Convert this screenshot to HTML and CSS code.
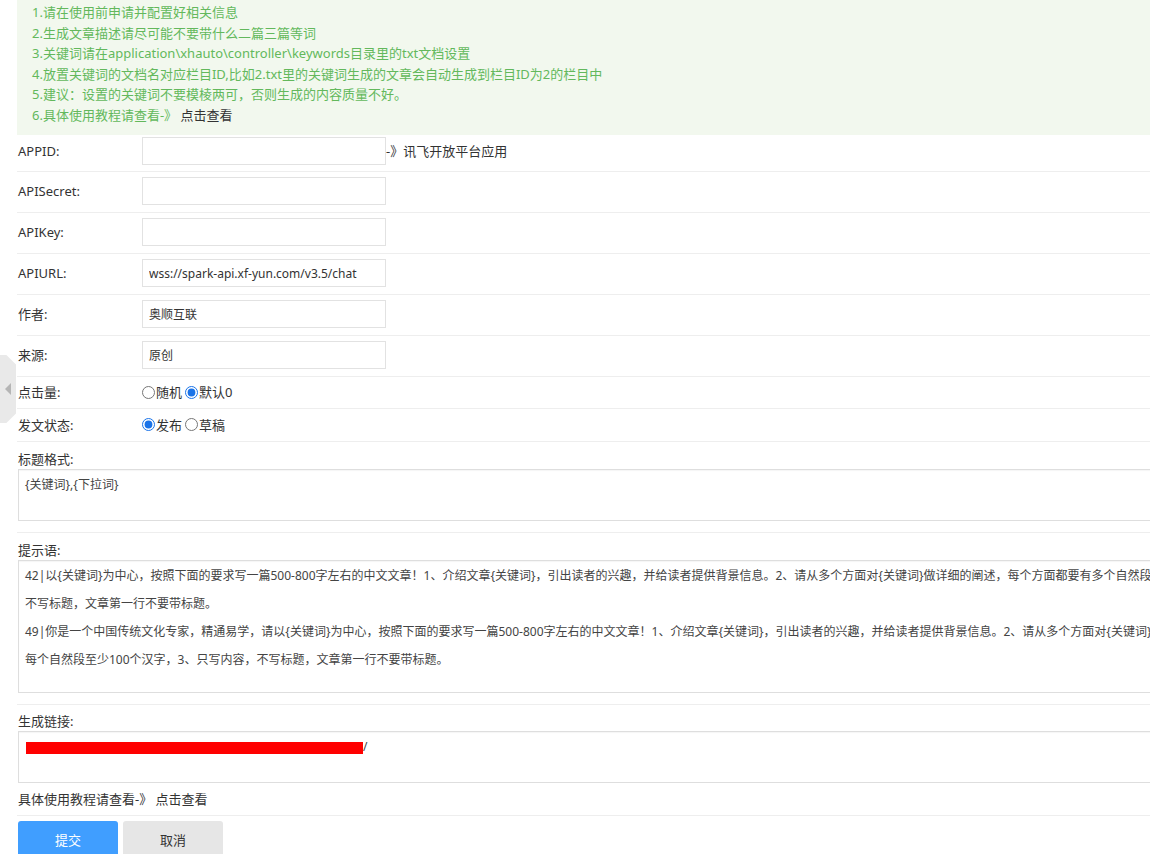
FILE: index.html
```html
<!DOCTYPE html>
<html lang="zh-CN">
<head>
<meta charset="utf-8">
<title>讯飞星火自动生成文章设置</title>
<link rel="stylesheet" href="styles.css">
</head>
<body>
<div class="page">
  <div class="tips">
    <div>1.请在使用前申请并配置好相关信息</div>
    <div>2.生成文章描述请尽可能不要带什么二篇三篇等词</div>
    <div>3.关键词请在application\xhauto\controller\keywords目录里的txt文档设置</div>
    <div>4.放置关键词的文档名对应栏目ID,比如2.txt里的关键词生成的文章会自动生成到栏目ID为2的栏目中</div>
    <div>5.建议：设置的关键词不要模棱两可，否则生成的内容质量不好。</div>
    <div>6.具体使用教程请查看-》 <a class="link" href="#">点击查看</a></div>
  </div>

  <div class="row row-first">
    <div class="label">APPID:</div>
    <input class="input" type="text" value="">
    <span class="after">-》讯飞开放平台应用</span>
  </div>
  <div class="row">
    <div class="label">APISecret:</div>
    <input class="input" type="text" value="">
  </div>
  <div class="row">
    <div class="label">APIKey:</div>
    <input class="input" type="text" value="">
  </div>
  <div class="row">
    <div class="label">APIURL:</div>
    <input class="input" type="text" value="wss://spark-api.xf-yun.com/v3.5/chat">
  </div>
  <div class="row">
    <div class="label">作者:</div>
    <input class="input" type="text" value="奥顺互联">
  </div>
  <div class="row">
    <div class="label">来源:</div>
    <input class="input" type="text" value="原创">
  </div>
  <div class="row row-radio">
    <div class="label">点击量:</div>
    <label class="opt"><input type="radio" name="hits">随机</label>
    <label class="opt"><input type="radio" name="hits" checked>默认0</label>
  </div>
  <div class="row row-radio row-radio2">
    <div class="label">发文状态:</div>
    <label class="opt"><input type="radio" name="status" checked>发布</label>
    <label class="opt"><input type="radio" name="status">草稿</label>
  </div>

  <div class="block">
    <div class="block-label">标题格式:</div>
    <textarea class="ta ta-short">{关键词},{下拉词}</textarea>
  </div>

  <div class="block">
    <div class="block-label">提示语:</div>
    <textarea class="ta ta-tall">42|以{关键词}为中心，按照下面的要求写一篇500-800字左右的中文文章！1、介绍文章{关键词}，引出读者的兴趣，并给读者提供背景信息。2、请从多个方面对{关键词}做详细的阐述，每个方面都要有多个自然段，每个自然段至少100个汉字，3、只写内容，
不写标题，文章第一行不要带标题。
49|你是一个中国传统文化专家，精通易学，请以{关键词}为中心，按照下面的要求写一篇500-800字左右的中文文章！1、介绍文章{关键词}，引出读者的兴趣，并给读者提供背景信息。2、请从多个方面对{关键词}做详细的阐述，每个方面都要有多个自然段，
每个自然段至少100个汉字，3、只写内容，不写标题，文章第一行不要带标题。</textarea>
  </div>

  <div class="block block-link">
    <div class="block-label">生成链接:</div>
    <div class="ta ta-short"><span class="redact"></span>/</div>
  </div>
  <div class="row-text">具体使用教程请查看-》 <a class="link" href="#">点击查看</a></div>

  <div class="actions">
    <button class="btn btn-primary" type="button">提交</button>
    <button class="btn btn-default" type="button">取消</button>
  </div>
</div>

<div class="side-tab"><span class="side-arrow"></span></div>
</body>
</html>
```

FILE: styles.css
```css
html, body {
  margin: 0;
  padding: 0;
  background: #fff;
}
body {
  overflow: hidden;
  font-family: "Noto Sans", "Noto Sans CJK SC", sans-serif;
  font-size: 13px;
  color: #333;
}
.page {
  width: 1700px;
  padding-left: 17px;
}
.tips {
  box-sizing: border-box;
  height: 135px;
  background: #f2f8ee;
  color: #63b85c;
  padding: 2px 15px 0;
  line-height: 20.6px;
}
.link {
  color: #333;
  text-decoration: none;
}
.row {
  display: flex;
  align-items: center;
  box-sizing: border-box;
  height: 41px;
  border-bottom: 1px solid #eee;
  padding: 5px 0 7px;
}
.row-first {
  height: 37px;
  padding: 2px 0 6px;
}
.label {
  width: 124px;
  padding-left: 1px;
  line-height: 20px;
  flex: none;
}
.input {
  width: 244px;
  height: 28px;
  box-sizing: border-box;
  border: 1px solid #e2e2e2;
  margin: 0;
  padding: 0 6px;
  font-family: "Noto Sans", "Noto Sans CJK SC", sans-serif;
  font-size: 12px;
  color: #333;
  outline: none;
  background: #fff;
}
.after {
  line-height: 20px;
}
.row-radio {
  height: 32px;
  padding: 0 0 1px;
}
.row-radio2 {
  height: 33px;
  padding: 0 0 1px;
}
.opt {
  display: inline-flex;
  align-items: center;
  line-height: 20px;
  margin-right: 3px;
}
.opt input {
  margin: 0 1px 0 0;
  width: 13px;
  height: 13px;
  accent-color: #1a73e8;
}
.block {
  border-bottom: 1px solid #eee;
  padding: 7px 0 11px 1px;
}
.block-label {
  line-height: 20px;
}
.ta {
  display: block;
  width: 1600px;
  box-sizing: border-box;
  margin: 0;
  border: 1px solid #dedede;
  box-shadow: inset 0 1px 1px rgba(0, 0, 0, 0.04);
  padding: 1px 6px;
  font-family: "Noto Sans", "Noto Sans CJK SC", sans-serif;
  font-size: 12px;
  line-height: 28px;
  color: #444;
  background: #fff;
  resize: none;
  overflow: hidden;
  white-space: pre;
  outline: none;
}
.ta-short {
  height: 52px;
}
.ta-tall {
  height: 133px;
}
.block-link {
  border-bottom: 0;
  padding: 6px 0 0 1px;
}
.redact {
  display: inline-block;
  width: 337px;
  height: 12px;
  margin-left: 1px;
  background: #ff0000;
  vertical-align: middle;
}
.row-text {
  line-height: 32px;
  padding-left: 1px;
  border-bottom: 1px solid #eee;
}
.actions {
  display: flex;
  gap: 5px;
  padding: 5px 0 0 1px;
}
.btn {
  width: 100px;
  height: 36px;
  border: 0;
  border-radius: 3px;
  font-family: "Noto Sans", "Noto Sans CJK SC", sans-serif;
  font-size: 13px;
  padding: 0;
  cursor: pointer;
}
.btn-primary {
  background: #409eff;
  color: #fff;
}
.btn-default {
  background: #e6e6e6;
  color: #333;
}
.side-tab {
  position: absolute;
  left: 0;
  top: 355px;
  width: 16px;
  height: 68px;
  background: #e9e9e9;
  clip-path: polygon(0 0, 40% 0, 100% 14%, 100% 86%, 40% 100%, 0 100%);
}
.side-arrow {
  position: absolute;
  left: 5px;
  top: 28px;
  width: 0;
  height: 0;
  border-top: 6px solid transparent;
  border-bottom: 6px solid transparent;
  border-right: 6px solid #b5b5b5;
}
```
